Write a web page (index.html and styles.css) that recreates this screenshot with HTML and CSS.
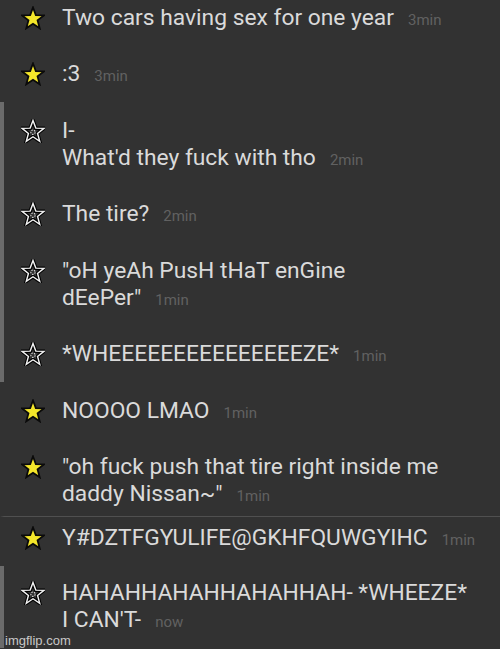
FILE: index.html
```html
<!DOCTYPE html>
<html lang="en">
<head>
    <meta charset="UTF-8">
    <meta name="viewport" content="width=device-width, initial-scale=1.0">
    <title>Chat</title>
    <link rel="stylesheet" href="styles.css">
</head>
<body>
    <svg width="0" height="0" class="defs">
        <defs>
            <path id="star" d="M10 1.2 L12.35 7.6 L19.1 7.8 L13.8 12 L15.6 18.6 L10 14.8 L4.4 18.6 L6.2 12 L0.9 7.8 L7.65 7.6 Z"/>
        </defs>
    </svg>
    <div class="chat">
        <div class="msg">
            <svg class="star full" viewBox="0 0 20 20"><use href="#star"/></svg>
            <div class="text">Two cars having sex for one year<span class="time">3min</span></div>
        </div>
        <div class="msg">
            <svg class="star full" viewBox="0 0 20 20"><use href="#star"/></svg>
            <div class="text">:3<span class="time">3min</span></div>
        </div>
        <div class="msg thread">
            <svg class="star empty" viewBox="0 0 20 20"><use href="#star" class="outer"/><use href="#star" class="inner"/><circle cx="10" cy="11" r="1.8"/></svg>
            <div class="text">I-<br>What'd they fuck with tho<span class="time">2min</span></div>
        </div>
        <div class="msg thread">
            <svg class="star empty" viewBox="0 0 20 20"><use href="#star" class="outer"/><use href="#star" class="inner"/><circle cx="10" cy="11" r="1.8"/></svg>
            <div class="text">The tire?<span class="time">2min</span></div>
        </div>
        <div class="msg thread">
            <svg class="star empty" viewBox="0 0 20 20"><use href="#star" class="outer"/><use href="#star" class="inner"/><circle cx="10" cy="11" r="1.8"/></svg>
            <div class="text">"oH yeAh PusH tHaT enGine<br>dEePer"<span class="time">1min</span></div>
        </div>
        <div class="msg thread">
            <svg class="star empty" viewBox="0 0 20 20"><use href="#star" class="outer"/><use href="#star" class="inner"/><circle cx="10" cy="11" r="1.8"/></svg>
            <div class="text">*WHEEEEEEEEEEEEEEEZE*<span class="time">1min</span></div>
        </div>
        <div class="msg">
            <svg class="star full" viewBox="0 0 20 20"><use href="#star"/></svg>
            <div class="text">NOOOO LMAO<span class="time">1min</span></div>
        </div>
        <div class="msg before-cut">
            <svg class="star full" viewBox="0 0 20 20"><use href="#star"/></svg>
            <div class="text">"oh fuck push that tire right inside me<br>daddy Nissan~"<span class="time">1min</span></div>
        </div>
        <div class="msg after-cut">
            <svg class="star full" viewBox="0 0 20 20"><use href="#star"/></svg>
            <div class="text">Y#DZTFGYULIFE@GKHFQUWGYIHC<span class="time">1min</span></div>
        </div>
        <div class="msg thread last">
            <svg class="star empty" viewBox="0 0 20 20"><use href="#star" class="outer"/><use href="#star" class="inner"/><circle cx="10" cy="11" r="1.8"/></svg>
            <div class="text">HAHAHHAHAHHAHAHHAH- *WHEEZE*<br>I CAN'T-<span class="time">now</span></div>
        </div>
    </div>
    <div class="watermark">imgflip.com</div>
</body>
</html>
```

FILE: styles.css
```css
body {
    margin: 0;
    padding: 0;
    background-color: #323232;
    font-family: Roboto, 'Noto Sans', sans-serif;
    height: 649px;
    overflow: hidden;
    position: relative;
}

.defs {
    position: absolute;
}

.chat {
    margin-top: -11.5px;
}

.msg {
    display: flex;
    align-items: flex-start;
    padding: 15px 0 14.5px;
    border-left: 4px solid transparent;
}

.msg.thread {
    border-left-color: #6b6b6b;
}

.msg.before-cut {
    padding-bottom: 8.5px;
    border-bottom: 1px solid #505050;
}

.msg.after-cut {
    padding-top: 7.5px;
    padding-bottom: 15px;
}

.msg.last {
    padding-top: 13px;
}

.star {
    width: 24px;
    height: 24px;
    margin: 2px 17px 0 17px;
    flex-shrink: 0;
}

.star.full {
    fill: #f4e62a;
    stroke: #0a0a0a;
    stroke-width: 1.5;
    stroke-linejoin: miter;
}

.star.empty .outer {
    fill: none;
    stroke: #000;
    stroke-width: 3;
}

.star.empty .inner {
    fill: none;
    stroke: #f2f2f2;
    stroke-width: 1.2;
}

.star.empty circle {
    fill: none;
    stroke: #d8d8d8;
    stroke-width: 0.9;
    stroke-dasharray: 1.2 0.9;
}

.text {
    color: #dadada;
    font-size: 22.8px;
    line-height: 27px;
}

.time {
    color: #616161;
    font-size: 15px;
    line-height: 1;
    margin-left: 14px;
}

.watermark {
    position: absolute;
    left: 5px;
    bottom: 1px;
    font-size: 13px;
    color: #c8c8c8;
    font-family: 'Liberation Sans', Arial, sans-serif;
}
```
